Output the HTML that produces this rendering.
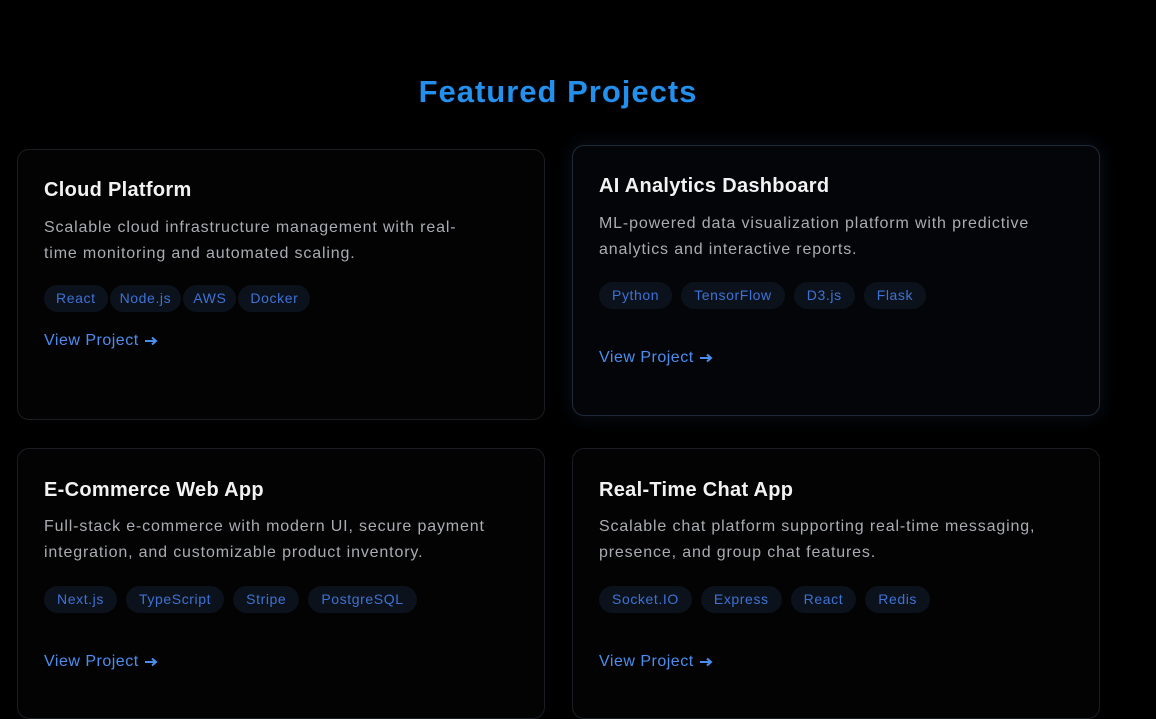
<!DOCTYPE html>
<html><head><meta charset="utf-8"><style>
*{margin:0;padding:0;box-sizing:border-box}
body{width:1156px;height:718px;background:#000;overflow:hidden;position:relative;font-family:"Liberation Sans",sans-serif}
h1{position:absolute;top:74px;left:0;width:1116px;text-align:center;font-size:31px;font-weight:bold;color:#2390ee;letter-spacing:1px}
.card{position:absolute;width:528px;height:271px;background:#030304;border:1px solid #1a1d22;border-radius:12px}
.card.hov{border-color:#1f2a3a;box-shadow:0 0 18px rgba(40,70,120,0.25);background:#040508}
.t{position:absolute;left:26px;font-size:20px;font-weight:bold;color:#f2f2f2;letter-spacing:0.3px}
.d{position:absolute;left:26px;width:500px;font-size:16px;line-height:26px;color:#a9acb1;letter-spacing:0.85px;white-space:nowrap}
.tags{position:absolute;left:26px;display:flex;gap:9px}
.tag{height:27px;line-height:27px;padding:0 13px;border-radius:14px;background:#0c121b;color:#3d72d6;font-size:14px;letter-spacing:0.6px}
.l{position:absolute;left:26px;font-size:16px;color:#4b8ef0;letter-spacing:0.5px;display:flex;align-items:center}
.l svg{margin-left:6px}
</style></head><body>
<h1>Featured Projects</h1>

<div class="card" style="left:17px;top:149px">
<div class="t" style="top:29px">Cloud Platform</div>
<div class="d" style="top:65px">Scalable cloud infrastructure management with real-<br>time monitoring and automated scaling.</div>
<div class="tags" style="top:135px;gap:2px"><span class="tag" style="padding:0 12px">React</span><span class="tag" style="padding:0 10px">Node.js</span><span class="tag" style="padding:0 10px">AWS</span><span class="tag" style="padding:0 12px">Docker</span></div>
<div class="l" style="top:182px">View Project <svg width="14" height="10" viewBox="0 0 14 10"><path d="M0 5H11M7 1.5L11 5L7 8.5" stroke="#4b8ef0" stroke-width="2" fill="none"/></svg></div>
</div>

<div class="card hov" style="left:572px;top:145px">
<div class="t" style="top:29px">AI Analytics Dashboard</div>
<div class="d" style="top:65px">ML-powered data visualization platform with predictive<br>analytics and interactive reports.</div>
<div class="tags" style="top:136px"><span class="tag">Python</span><span class="tag">TensorFlow</span><span class="tag">D3.js</span><span class="tag">Flask</span></div>
<div class="l" style="top:203px">View Project <svg width="14" height="10" viewBox="0 0 14 10"><path d="M0 5H11M7 1.5L11 5L7 8.5" stroke="#4b8ef0" stroke-width="2" fill="none"/></svg></div>
</div>

<div class="card" style="left:17px;top:448px">
<div class="t" style="top:30px">E-Commerce Web App</div>
<div class="d" style="top:65px">Full-stack e-commerce with modern UI, secure payment<br>integration, and customizable product inventory.</div>
<div class="tags" style="top:137px"><span class="tag">Next.js</span><span class="tag">TypeScript</span><span class="tag">Stripe</span><span class="tag">PostgreSQL</span></div>
<div class="l" style="top:204px">View Project <svg width="14" height="10" viewBox="0 0 14 10"><path d="M0 5H11M7 1.5L11 5L7 8.5" stroke="#4b8ef0" stroke-width="2" fill="none"/></svg></div>
</div>

<div class="card" style="left:572px;top:448px">
<div class="t" style="top:30px">Real-Time Chat App</div>
<div class="d" style="top:65px">Scalable chat platform supporting real-time messaging,<br>presence, and group chat features.</div>
<div class="tags" style="top:137px"><span class="tag">Socket.IO</span><span class="tag">Express</span><span class="tag">React</span><span class="tag">Redis</span></div>
<div class="l" style="top:204px">View Project <svg width="14" height="10" viewBox="0 0 14 10"><path d="M0 5H11M7 1.5L11 5L7 8.5" stroke="#4b8ef0" stroke-width="2" fill="none"/></svg></div>
</div>
</body></html>
